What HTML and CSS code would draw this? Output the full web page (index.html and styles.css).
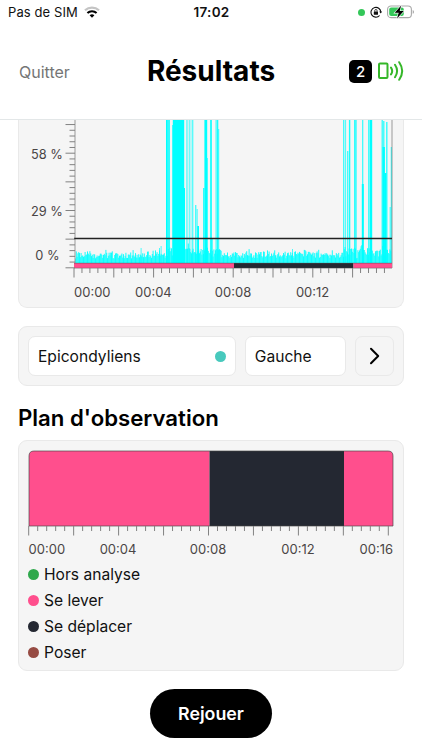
FILE: index.html
```html
<!DOCTYPE html>
<html lang="fr">

<head>
    <meta charset="UTF-8">
    <meta name="viewport" content="width=device-width, initial-scale=1.0">
    <title>Résultats</title>
    <link rel="stylesheet" href="styles.css">
</head>

<body>
    <div class="status-bar">
        <div class="status-left">
            <span>Pas de SIM</span>
            <svg width="16" height="12" viewBox="0 0 16 12" fill="none">
                <path d="M1 4.3a10.3 10.3 0 0 1 14 0" stroke="#c4c4c4" stroke-width="2.2" />
                <path d="M3.4 7a6.8 6.8 0 0 1 9.2 0" stroke="#000" stroke-width="2.1" />
                <path d="M8 11.8 5.6 9.3a3.5 3.5 0 0 1 4.8 0z" fill="#000" />
            </svg>
        </div>
        <span class="clock">17:02</span>
        <div class="status-right">
            <span class="camera-dot"></span>
            <svg width="12" height="12" viewBox="0 0 12 12" fill="none">
                <path d="M9.6 9.5a4.9 4.9 0 1 1 1.2-3" stroke="#111" stroke-width="1.1" />
                <path d="M9.2 5.6h2.8l-1.3 2z" fill="#111" />
                <rect x="3.8" y="5.4" width="4.2" height="3.3" rx=".5" fill="#111" />
                <path d="M4.7 5.6v-.9a1.2 1.2 0 0 1 2.4 0v.9" stroke="#111" stroke-width=".8" />
            </svg>
            <svg width="28" height="14" viewBox="0 0 28 14">
                <rect x=".6" y="1" width="23.8" height="11.6" rx="3.4" fill="#fff" stroke="#a8a8a8" stroke-width="1.1" />
                <rect x="2.2" y="2.6" width="14.6" height="8.4" rx="2" fill="#34c759" />
                <path d="M25.7 5v3.8q1.3-.5 1.3-1.9T25.7 5z" fill="#a8a8a8" />
                <path d="M14.2.6 7.7 7.8h4L10 13.4l6.8-7.3h-4.1z" fill="#000" stroke="#fff" stroke-width="1.2" paint-order="stroke" />
            </svg>
        </div>
    </div>

    <header class="header">
        <a class="quit">Quitter</a>
        <h1>Résultats</h1>
        <div class="sensors">
            <span class="sensor-count">2</span>
            <svg width="27" height="22" viewBox="0 0 27 22" fill="none" stroke="#35b729" stroke-width="2">
                <rect x="2" y="3.5" width="8.5" height="14.5" rx="1" />
                <path d="M14 7.6q2.4 3.4 0 6.8M18 4.8q4.200 6.200 0 12.400M22.200 2.200q6 8.800 0 17.600" stroke-linecap="round" />
            </svg>
        </div>
    </header>

    <main>
        <section class="card signal-card">
            <svg id="signalChart" class="signal-chart" viewBox="19 120 384 187" width="384" height="187">
                <g id="signal" fill="#00ffff"></g>
                <path d="M75 120V268M392 120V268" stroke="#999" />
                <rect x="74" y="263" width="160" height="5" fill="#ff4f8d" />
                <rect x="234" y="263" width="119.5" height="5" fill="#242832" />
                <rect x="353.5" y="263" width="38.5" height="5" fill="#ff4f8d" />
                <path d="M74 263.2H392M74 268.2H392" stroke="#555" stroke-opacity=".6" stroke-width=".8" />
                <path d="M74 238.4H392" stroke="#222" stroke-width="1.5" />
                <path id="signalTicks" stroke="#828282" />
                <g class="axis-label percent">
                    <text x="31" y="158.6">58 %</text>
                    <text x="31" y="215.6">29 %</text>
                    <text x="35.3" y="260">0 %</text>
                </g>
                <g class="axis-label">
                    <text x="74" y="296.6">00:00</text>
                    <text x="153.4" y="296.6" text-anchor="middle">00:04</text>
                    <text x="233" y="296.6" text-anchor="middle">00:08</text>
                    <text x="312.6" y="296.6" text-anchor="middle">00:12</text>
                </g>
            </svg>
        </section>

        <section class="card filters">
            <div class="field muscle">
                <span>Epicondyliens</span>
                <span class="dot teal"></span>
            </div>
            <div class="field side">Gauche</div>
            <button type="button" class="next">
                <svg width="12" height="18" viewBox="0 0 12 18" fill="none" stroke="#000" stroke-width="2">
                    <path d="M2 1.8 9.2 9 2 16.2" stroke-linecap="round" stroke-linejoin="round" />
                </svg>
            </button>
        </section>

        <h2>Plan d'observation</h2>

        <section class="card plan">
            <svg class="plan-chart" viewBox="19 441 384 120" width="384" height="120">
                <path d="M29 526V456q0-5 5-5H209.5V526z" fill="#ff4f8d" />
                <rect x="209.5" y="451" width="134.5" height="75" fill="#242832" />
                <path d="M344 451H388q5 0 5 5V526H344z" fill="#ff4f8d" />
                <path d="M29 526V456q0-5 5-5H388q5 0 5 5V526z" fill="none" stroke="#444" stroke-opacity=".65" />
                <path id="planTicks" stroke="#828282" />
                <g class="axis-label">
                    <text x="28.6" y="554">00:00</text>
                    <text x="118" y="554" text-anchor="middle">00:04</text>
                    <text x="208" y="554" text-anchor="middle">00:08</text>
                    <text x="298" y="554" text-anchor="middle">00:12</text>
                    <text x="393" y="554" text-anchor="end">00:16</text>
                </g>
            </svg>
            <ul class="legend">
                <li><span class="dot green"></span>Hors analyse</li>
                <li><span class="dot pink"></span>Se lever</li>
                <li><span class="dot dark"></span>Se déplacer</li>
                <li><span class="dot brown"></span>Poser</li>
            </ul>
        </section>

        <button type="button" class="replay">Rejouer</button>
    </main>

    <script src="script.js"></script>
</body>

</html>
```

FILE: styles.css
```css
* {
    box-sizing: border-box;
}

body {
    font-family: Inter, "Liberation Sans", sans-serif;
    background-color: #fff;
    color: #111;
    width: 422px;
    height: 750px;
    margin: 0;
    overflow: hidden;
}

svg {
    display: block;
}

.status-bar {
    display: grid;
    grid-template-columns: 1fr auto 1fr;
    align-items: center;
    height: 24px;
    padding: 0 7px 0 8px;
    font-size: 13px;
}

.status-left,
.status-right {
    display: flex;
    align-items: center;
}

.status-left {
    gap: 6px;
    letter-spacing: 0.1px;
}

.clock {
    font-size: 13.5px;
    font-weight: 600;
    letter-spacing: 0.3px;
}

.status-right {
    justify-content: flex-end;
    gap: 5px;
}

.camera-dot {
    width: 7px;
    height: 7px;
    border-radius: 50%;
    background-color: #34c759;
}

.header {
    display: grid;
    grid-template-columns: 1fr auto 1fr;
    align-items: center;
    height: 96px;
    padding: 0 18px;
    border-bottom: 1px solid #e3e7e8;
}

.quit {
    padding-left: 1px;
    font-size: 16px;
    color: #757575;
}

h1 {
    margin: 0;
    font-size: 28px;
    font-weight: 700;
    line-height: 34px;
    padding-bottom: 1px;
    color: #000;
}

.sensors {
    display: flex;
    justify-content: flex-end;
    align-items: center;
    gap: 5px;
    padding-bottom: 1px;
}

.sensor-count {
    width: 23px;
    height: 23px;
    border-radius: 5px;
    background-color: #000;
    color: #fff;
    font-size: 15px;
    font-weight: 500;
    line-height: 23px;
    text-align: center;
}

main {
    padding: 0 18px;
}

.card {
    background-color: #f5f5f5;
    border: 1px solid #e9e9e9;
    border-radius: 9px;
}

.signal-card {
    height: 188px;
    border-top: 0;
    border-radius: 0 0 9px 9px;
}

.axis-label {
    font-size: 13px;
    fill: #4a4545;
}

.percent {
    font-size: 12.8px;
}

.filters {
    display: flex;
    gap: 9px;
    height: 60px;
    margin-top: 18px;
    padding: 9px;
}

.field,
.next {
    height: 40px;
    border: 1px solid #e9e9e9;
    border-radius: 7px;
}

.field {
    display: flex;
    justify-content: space-between;
    align-items: center;
    padding: 0 9px;
    background-color: #fff;
    font-size: 15.6px;
}

.muscle {
    width: 209px;
}

.side {
    width: 102px;
}

.next {
    display: flex;
    justify-content: center;
    align-items: center;
    width: 39px;
    padding: 0;
    background-color: #f5f5f5;
}

.dot {
    width: 11px;
    height: 11px;
    border-radius: 50%;
}

.teal {
    background-color: #48c9bd;
}

.green {
    background-color: #2fa84c;
}

.pink {
    background-color: #ff4f8d;
}

.dark {
    background-color: #242832;
}

.brown {
    background-color: #964b43;
}

h2 {
    margin: 18px 0 8px;
    font-size: 22.2px;
    font-weight: 600;
    line-height: 28px;
    color: #000;
}

.plan {
    height: 231px;
}

.legend {
    margin: 1px 0 0;
    padding: 0 0 0 9px;
    list-style: none;
}

.legend li {
    display: flex;
    align-items: center;
    gap: 5px;
    height: 25.8px;
    font-size: 15.6px;
}

.replay {
    display: block;
    width: 122px;
    height: 49px;
    margin: 18px auto 0;
    border: none;
    border-radius: 25px;
    background-color: #000;
    color: #fff;
    font-family: inherit;
    font-size: 17.8px;
    font-weight: 600;
}
```

FILE: script.js
```javascript
const BASE = 263;
const TOP = 120;

// [x, width, top, opacity]
const spikes = [
    [166, 1.8, TOP, 1], [167.8, 2.2, TOP, .8], [172, 1, 125, .7], [172.8, 11.4, TOP, 1],
    [184, 1, 188, 1], [186.2, 1.5, TOP, .6], [188.7, 1.4, TOP, .55], [190.6, .9, TOP, .5],
    [192.2, 1.1, TOP, .8], [195, 1.4, 205, .7], [196.6, 1.1, 209, .7], [197.2, 1.8, 226, 1],
    [203, 1.5, 188, .8], [204.4, 2.8, TOP, 1], [207, .9, 158, .7], [210.1, 1.8, TOP, .9],
    [211.6, 1, 238, 1], [215.4, 1.4, TOP, .6], [216.8, 1.5, TOP, .9], [218.2, 1, 129, .8],
    [343.1, 1.2, TOP, .8], [344.9, 1.2, TOP, .65], [347.1, 1.2, 151, .8], [348.9, 1.4, TOP, .9],
    [354, 1.3, TOP, .8], [355.3, 1.3, TOP, .9], [362.1, 1.2, TOP, .8], [361.8, 2, 184, 1],
    [368.1, 1.5, TOP, .8], [369.8, 2.4, TOP, 1], [381.5, 1.5, TOP, .7], [383, 1.5, 121, .7],
    [382.5, 2.4, 147, 1], [384.4, 2, 173, 1], [386.1, 1.4, 122, .8], [389.6, 1.2, 207, .7],
    [390.8, 1.2, 147, .9],
    [140.6, 1, 248, .7], [159, 1, 248, .7], [160.6, 1, 246, .7], [292, 1, 249, .7]
];

let seed = 17;

function random() {
    seed = (seed * 16807) % 2147483647;
    return seed / 2147483647;
}

function bar(x, width, top, opacity) {
    return `<rect x="${x}" y="${top}" width="${width}" height="${BASE - top}" opacity="${opacity}" />`;
}

function drawSignal() {
    let html = "";
    for (let x = 75; x < 391.5; x += 0.8) {
        const active = (x > 166 && x < 220) || x > 343;
        const height = 4.5 + random() * 6 + Math.pow(random(), 4) * 5 + (active ? random() * 5 : 0);
        html += bar(x.toFixed(1), 1, (BASE - height).toFixed(1), 0.9);
    }
    spikes.forEach(spike => {
        html += bar(...spike);
    });
    document.getElementById("signal").innerHTML = html;
}

function timeTicks(start, step, count, y, long, short) {
    let d = "";
    for (let i = 0; i < count; i++) {
        d += `M${(start + i * step).toFixed(2)} ${y}v${i % 5 === 0 ? long : short}`;
    }
    return d;
}

function percentTicks() {
    let d = "";
    for (let i = 0; i <= 25; i++) {
        const width = i % 5 === 0 ? 9.5 : 5.5;
        d += `M${75 - width} ${(267.8 - i * 5.73).toFixed(2)}h${width}`;
    }
    return d;
}

drawSignal();
document.getElementById("signalTicks").setAttribute("d",
    percentTicks() + timeTicks(74, 7.96, 40, 268, 9.5, 5));
document.getElementById("planTicks").setAttribute("d",
    timeTicks(28.7, 8.99, 41, 526, 9.5, 5));
```
